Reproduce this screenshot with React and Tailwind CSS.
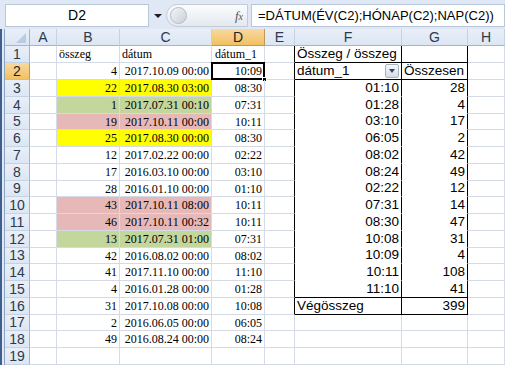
import React from 'react'

const COLS = [
  { key: 'A', w: 27 },
  { key: 'B', w: 63 },
  { key: 'C', w: 92 },
  { key: 'D', w: 53 },
  { key: 'E', w: 30 },
  { key: 'F', w: 107 },
  { key: 'G', w: 66 },
  { key: 'H', w: 37 },
]

const rows = [
  [4, '2017.10.09 00:00', '10:09', ''],
  [22, '2017.08.30 03:00', '08:30', 'y'],
  [1, '2017.07.31 00:10', '07:31', 'g'],
  [19, '2017.10.11 00:00', '10:11', 'p'],
  [25, '2017.08.30 00:00', '08:30', 'y'],
  [12, '2017.02.22 00:00', '02:22', ''],
  [17, '2016.03.10 00:00', '03:10', ''],
  [28, '2016.01.10 00:00', '01:10', ''],
  [43, '2017.10.11 08:00', '10:11', 'p'],
  [46, '2017.10.11 00:32', '10:11', 'p'],
  [13, '2017.07.31 01:00', '07:31', 'g'],
  [42, '2016.08.02 00:00', '08:02', ''],
  [41, '2017.11.10 00:00', '11:10', ''],
  [4, '2016.01.28 00:00', '01:28', ''],
  [31, '2017.10.08 00:00', '10:08', ''],
  [2, '2016.06.05 00:00', '06:05', ''],
  [49, '2016.08.24 00:00', '08:24', ''],
]

const pivot = [
  ['01:10', 28], ['01:28', 4], ['03:10', 17], ['06:05', 2], ['08:02', 42],
  ['08:24', 49], ['02:22', 12], ['07:31', 14], ['08:30', 47], ['10:08', 31],
  ['10:09', 4], ['10:11', 108], ['11:10', 41],
]

const fills = { y: 'bg-[#ffff00]', g: 'bg-[#c3d69b]', p: 'bg-[#e6b9b8]', '': 'bg-white' }

// rows 5, 9, 13, 17 are a pixel shorter, like the scaled screenshot
const rowH = n => ([5, 9, 13, 17].includes(n) ? 'h-[16px]' : 'h-[17px]')

const serif = "font-['Liberation_Serif',serif] text-[12px]"
const sans = "font-['Liberation_Sans',Arial,sans-serif] text-[13.5px]"

function Cell({ w, className = '', children }) {
  return (
    <div
      style={{ width: w }}
      className={`shrink-0 flex items-center overflow-visible whitespace-nowrap px-[2px] border-r border-b border-[#d4dbe7] ${className}`}
    >
      {children}
    </div>
  )
}

function PivotCell(r, col) {
  // content and border classes for F/G in row r
  const black = 'border-r-black'
  if (r === 1) {
    return col === 'F'
      ? [<span className={sans}>Összeg / összeg</span>, `${black} border-b-black`]
      : [null, `${black} border-b-black`]
  }
  if (r === 2) {
    return col === 'F'
      ? [
          <div className="flex w-full items-center justify-between">
            <span className={sans}>dátum_1</span>
            <span className="flex h-[14px] w-[14px] items-center justify-center rounded-[2px] border border-[#a9b4c2] bg-gradient-to-b from-[#f6f8fb] to-[#d5dce6]">
              <span className="h-0 w-0 border-x-[3px] border-t-[4px] border-x-transparent border-t-[#3a4a60]" />
            </span>
          </div>,
          `${black} border-b-black`,
        ]
      : [<span className={sans}>Összesen</span>, `${black} border-b-black`]
  }
  if (r >= 3 && r <= 15) {
    const [t, v] = pivot[r - 3]
    const last = r === 15
    return col === 'F'
      ? [<span className={`${sans} ml-auto`}>{t}</span>, `${black} ${last ? 'border-b-black' : 'border-b-white'}`]
      : [<span className={`${sans} ml-auto`}>{v}</span>, `${black} ${last ? 'border-b-black' : 'border-b-white'}`]
  }
  if (r === 16) {
    return col === 'F'
      ? [<span className={sans}>Végösszeg</span>, `${black} border-b-black`]
      : [<span className={`${sans} ml-auto`}>399</span>, `${black} border-b-black`]
  }
  return [null, '']
}

function Row({ n }) {
  const d = n >= 2 && n <= 18 ? rows[n - 2] : null
  const fill = d ? fills[d[3]] : 'bg-white'
  const sel = n === 2
  const inPivot = n >= 1 && n <= 16
  const [fC, fCls] = PivotCell(n, 'F')
  const [gC, gCls] = PivotCell(n, 'G')
  return (
    <div className={`flex ${rowH(n)}`}>
      <div
        className={`w-[25px] shrink-0 flex items-center justify-center border-r border-b font-['Liberation_Sans',Arial,sans-serif] text-[14px] ${
          sel
            ? 'bg-gradient-to-b from-[#f9d99f] to-[#f1c15f] border-r-[#c2955b] border-b-[#e2b97a] text-[#20242a]'
            : 'bg-gradient-to-b from-[#e9eff8] to-[#dce6f4] border-r-[#9eb6ce] border-b-[#c5d2e2] text-[#2c3a4d]'
        }`}
      >
        {n}
      </div>
      <Cell w={27} />
      <Cell w={63} className={`${fill} justify-end`}>
        {n === 1 ? <span className={`${serif} mr-auto`}>összeg</span> : d && <span className={serif}>{d[0]}</span>}
      </Cell>
      <Cell w={92} className={`${fill} justify-end`}>
        {n === 1 ? <span className={`${serif} mr-auto`}>dátum</span> : d && <span className={serif}>{d[1]}</span>}
      </Cell>
      <Cell w={53} className="justify-end relative">
        {n === 1 ? <span className={`${serif} mr-auto pl-[1px]`}>dátum_1</span> : d && <span className={serif}>{d[2]}</span>}
        {sel && (
          <>
            <span className="pointer-events-none absolute -left-[1px] -top-[1px] h-[18px] w-[54px] border-2 border-black" />
            <span className="absolute -bottom-[3px] -right-[3px] h-[5px] w-[5px] border border-white bg-black" />
          </>
        )}
      </Cell>
      <Cell w={30} className={inPivot ? 'border-r-black' : ''} />
      <Cell w={107} className={fCls}>{fC}</Cell>
      <Cell w={66} className={gCls}>{gC}</Cell>
      <Cell w={37} />
    </div>
  )
}

export default function App() {
  const rowNums = Array.from({ length: 19 }, (_, i) => i + 1)
  return (
    <div className="relative h-[366px] w-[505px] overflow-hidden bg-white">
      {/* formula bar */}
      <div className="flex h-[29px] items-stretch bg-[#dfe8f4] pt-[4px] pb-[2px] pl-[5px]">
        <div className="flex w-[144px] items-center justify-center border border-[#b7c6d9] bg-white font-['Liberation_Sans',Arial,sans-serif] text-[14px] text-black">
          D2
        </div>
        <div className="flex w-[17px] items-center justify-center">
          <span className="h-0 w-0 border-x-[4px] border-t-[4px] border-x-transparent border-t-[#1d1d1d]" />
        </div>
        <div className="flex w-[82px] items-center rounded-l-[12px] border border-[#c3cbd6] bg-gradient-to-b from-[#fbfcfd] to-[#e4e9ef]">
          <span className="ml-[3px] h-[17px] w-[17px] rounded-full border border-[#b4bcc8] bg-gradient-to-br from-[#f3f5f8] to-[#c9d0da]" />
          <span className="ml-auto mr-[4px] font-['Liberation_Serif',serif] text-[13px] italic text-[#555]">
            f<span className="text-[10px]">x</span>
          </span>
        </div>
        <div className="ml-[3px] flex flex-1 items-center border border-[#b7c6d9] bg-white pl-[6px] font-['Liberation_Sans',Arial,sans-serif] text-[13px] text-black">
          =DÁTUM(ÉV(C2);HÓNAP(C2);NAP(C2))
        </div>
      </div>

      <div className="flex">
        {/* left frame */}
        <div className="w-[5px] shrink-0 border-l-[2px] border-r-[1px] border-l-[#3f5f8c] border-r-[#8aa3c3] bg-[#dfe8f4]" />
        <div className="flex flex-col">
          {/* column headers */}
          <div className="flex h-[17px]">
            <div className="relative w-[25px] shrink-0 border-r border-b border-[#9eb6ce] bg-gradient-to-b from-[#e9eff8] to-[#dce6f4]">
              <svg className="absolute bottom-[2px] right-[3px]" width="10" height="10" viewBox="0 0 10 10">
                <polygon points="10,0 10,10 0,10" fill="#b8cbe2" />
              </svg>
            </div>
            {COLS.map(c => (
              <div
                key={c.key}
                style={{ width: c.w }}
                className={`shrink-0 flex items-center justify-center border-r border-b font-['Liberation_Sans',Arial,sans-serif] text-[14px] ${
                  c.key === 'D'
                    ? 'bg-gradient-to-b from-[#f9d99f] to-[#f1c15f] border-r-[#c2955b] border-b-[#c2955b] text-[#20242a]'
                    : 'bg-gradient-to-b from-[#e9eff8] to-[#dce6f4] border-r-[#c5d2e2] border-b-[#9eb6ce] text-[#2c3a4d]'
                }`}
              >
                {c.key}
              </div>
            ))}
          </div>
          {rowNums.map(n => (
            <Row key={n} n={n} />
          ))}
        </div>
      </div>
    </div>
  )
}
